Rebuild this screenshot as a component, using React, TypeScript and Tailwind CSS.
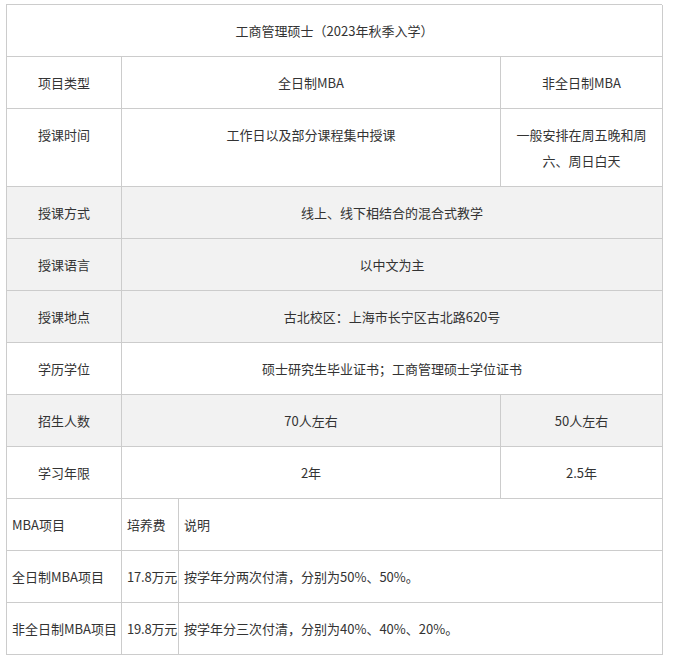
const F = { fontFamily: '"Microsoft YaHei","Noto Sans CJK SC","Noto Sans",sans-serif' };
const c = "border-r border-b border-[#cccccc] pt-[13px] pb-[12px] leading-[26px] text-center px-1";
const l = "border-r border-b border-[#cccccc] pt-[13px] pb-[12px] leading-[26px] text-left px-[5px] whitespace-nowrap";
export default function App() {
  const rows: [string, string, string | null, boolean][] = [
    ["项目类型", "全日制MBA", "非全日制MBA", false],
    ["授课时间", "工作日以及部分课程集中授课", "一般安排在周五晚和周六、周日白天", false],
    ["授课方式", "线上、线下相结合的混合式教学", null, true],
    ["授课语言", "以中文为主", null, true],
    ["授课地点", "古北校区：上海市长宁区古北路620号", null, true],
    ["学历学位", "硕士研究生毕业证书；工商管理硕士学位证书", null, false],
    ["招生人数", "70人左右", "50人左右", true],
    ["学习年限", "2年", "2.5年", false],
  ];
  return (
    <div className="bg-white w-[673px] h-[660px] pt-[4px] pl-[6px] text-[13px] text-[#333]" style={F}>
      <div className="w-[656px] border-l border-t border-[#cccccc] grid grid-cols-[115px_379px_162px]">
        <div className={c + " col-span-3"}>工商管理硕士（2023年秋季入学）</div>
        {rows.map(([a, b, d, g]) => (
          <div key={a} className={"contents"}>
            <div className={c + (g ? " bg-[#f2f2f2]" : "")}>{a}</div>
            {d === null ? (
              <div className={c + " col-span-2" + (g ? " bg-[#f2f2f2]" : "")}>{b}</div>
            ) : (
              <>
                <div className={c + (g ? " bg-[#f2f2f2]" : "")}>{b}</div>
                <div className={c + " px-3" + (g ? " bg-[#f2f2f2]" : "")}>{d}</div>
              </>
            )}
          </div>
        ))}
      </div>
      <div className="w-[656px] border-l border-[#cccccc] grid grid-cols-[115px_57px_484px]">
        {[
          ["MBA项目", "培养费", "说明"],
          ["全日制MBA项目", "17.8万元", "按学年分两次付清，分别为50%、50%。"],
          ["非全日制MBA项目", "19.8万元", "按学年分三次付清，分别为40%、40%、20%。"],
        ].map((r) => (
          <div key={r[0]} className="contents">
            {r.map((t, i) => (
              <div key={i} className={l + (i === 1 ? " px-[2px] tracking-[-0.2px]" : "")}>{t}</div>
            ))}
          </div>
        ))}
      </div>
    </div>
  );
}
